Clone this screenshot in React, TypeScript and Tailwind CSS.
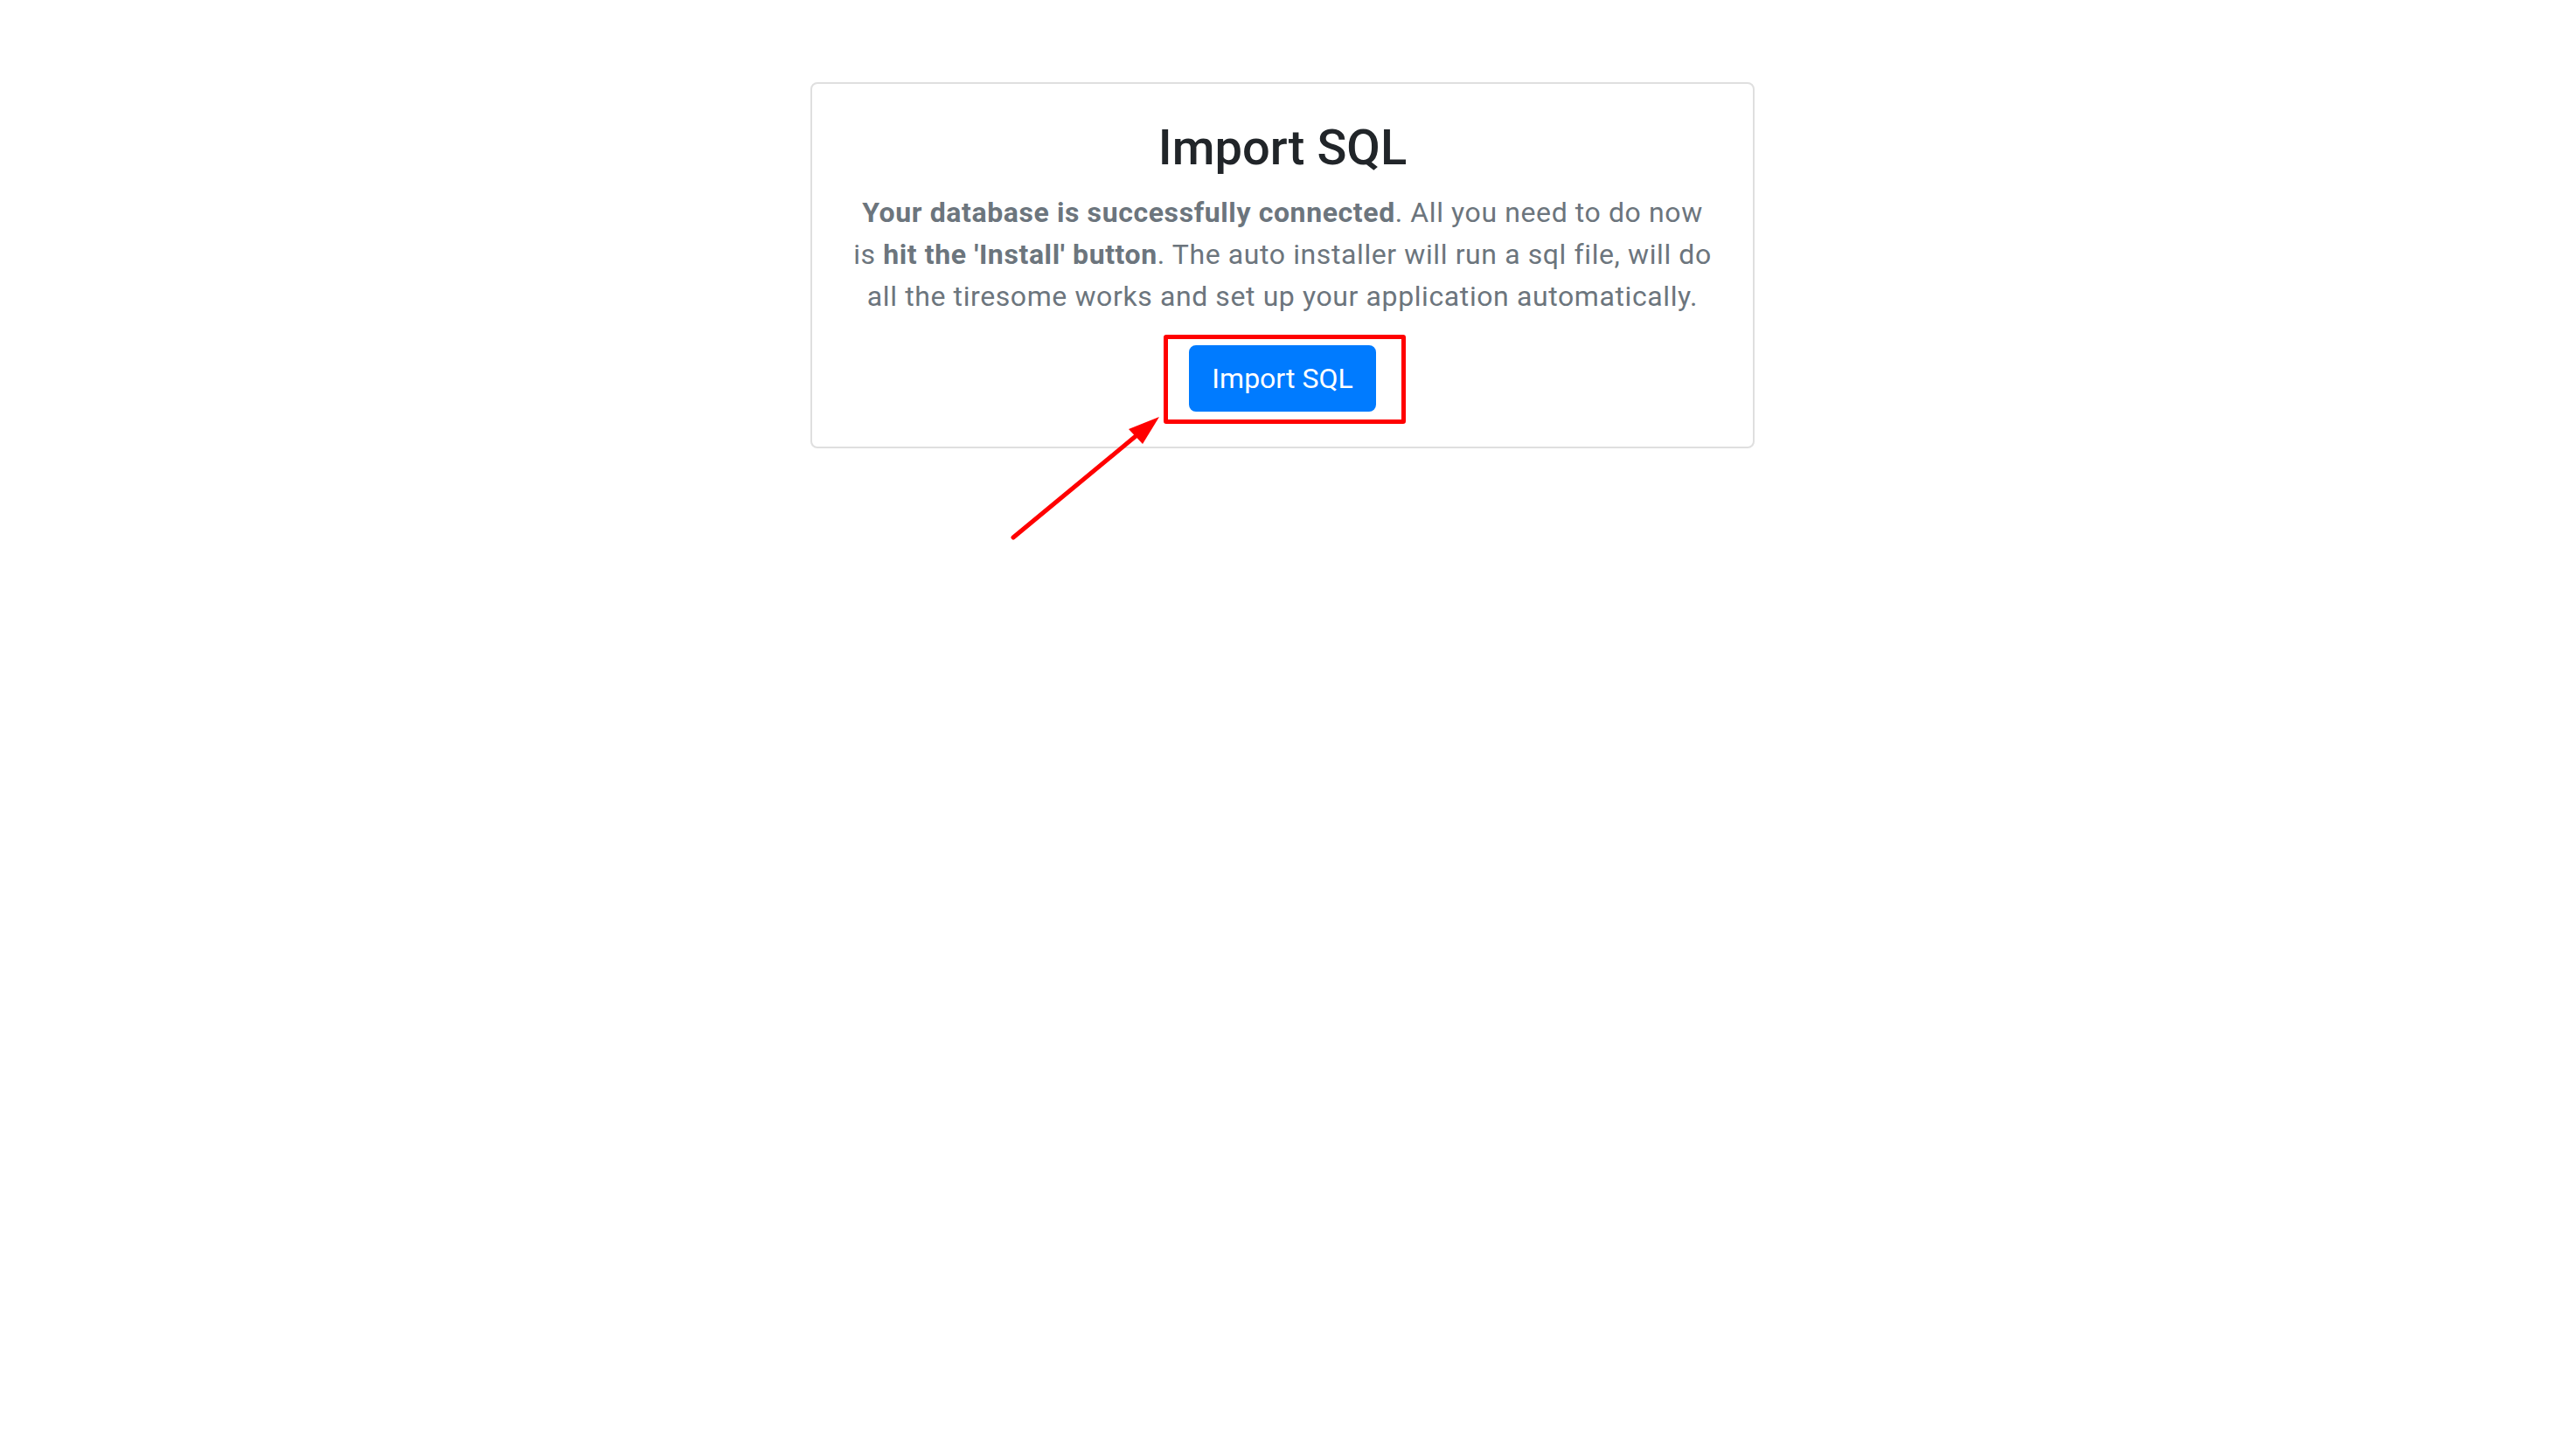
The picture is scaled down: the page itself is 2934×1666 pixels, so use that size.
export default function App() {
  return (
    <div className="relative min-h-screen w-full bg-white pt-[94px] font-['Roboto','Liberation_Sans',sans-serif]">
      {/* Card */}
      <div className="mx-auto w-[1080px] rounded-[8px] border-2 border-[#dfdfdf] p-[40px] text-center">
        <h3 className="mb-[16px] text-[56px] leading-[1.2] font-medium text-[#212529]">
          Import SQL
        </h3>
        <p className="mb-[32px] text-[32px] leading-[1.5] tracking-[0.6px] text-[#6c757d]">
          <span className="font-bold">Your database is successfully connected</span>. All you
          need to do now
          <br />
          is <span className="font-bold">hit the 'Install' button</span>. The auto installer will
          run a sql file, will do
          <br />
          all the tiresome works and set up your application automatically.
        </p>
        <div className="relative inline-block">
          <button
            type="button"
            className="rounded-[8px] border-2 border-[#007bff] bg-[#007bff] px-[24px] py-[12px] text-[32px] leading-[48px] text-white"
          >
            Import SQL
          </button>
          {/* highlight box */}
          <span className="pointer-events-none absolute -top-[12px] -bottom-[14px] -left-[29px] -right-[34px] rounded-[3px] border-[5px] border-[#ff0000]" />
        </div>
      </div>

      {/* annotation arrow */}
      <svg
        className="pointer-events-none absolute left-0 top-0"
        width="2934"
        height="1666"
        viewBox="0 0 2934 1666"
      >
        <line
          x1="1159"
          y1="615"
          x2="1304"
          y2="495"
          stroke="#ff0000"
          strokeWidth="5"
          strokeLinecap="round"
        />
        <polygon points="1326,477 1291,491 1307,508" fill="#ff0000" />
      </svg>
    </div>
  );
}
